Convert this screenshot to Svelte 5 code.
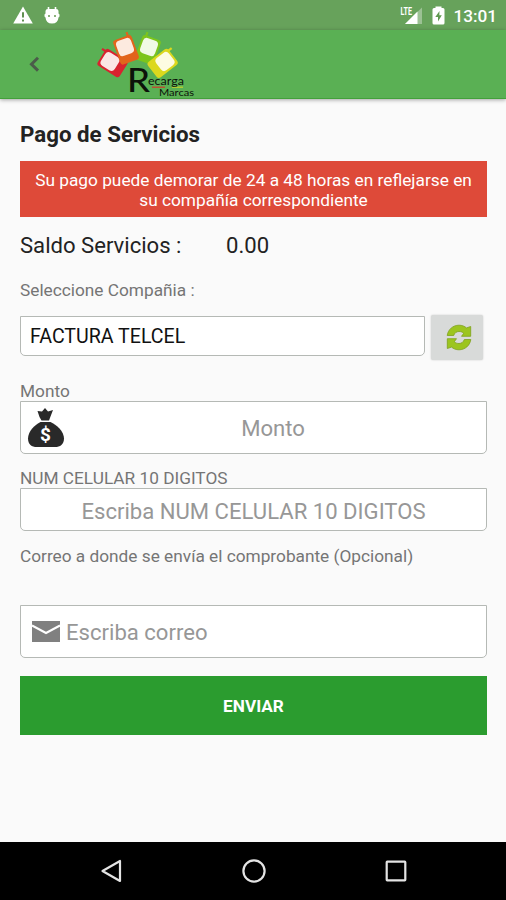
<script lang="ts">
  let saldo = $state('0.00')
  let monto = $state('')
  let celular = $state('')
  let correo = $state('')

  const phones = [
    { x: 110, y: 61.5, angle: -58, antenna: 6.5, color: '#d8232f', fill: '#fbe6e5' },
    { x: 149, y: 47, angle: 20, antenna: -6.5, color: '#7cc51c', fill: '#f1fae6' },
    { x: 125, y: 47, angle: -20, antenna: 6.5, color: '#e2641b', fill: '#fdeadf' },
    { x: 165, y: 61.5, angle: 52, antenna: -6.5, color: '#dcd81e', fill: '#fdfce2' }
  ]
</script>

<div class="screen">
  <div class="status">
    <svg class="warning" width="20" height="18" viewBox="0 0 20 18">
      <path d="M10 .5 19.8 17.5H.2z" fill="#fff" />
      <path d="M10 6.2v5.3M10 13.4v2" stroke="#5f8f50" stroke-width="2" />
    </svg>
    <svg class="robot" width="16" height="19" viewBox="0 0 16 19">
      <path d="M4.500 1v3M11.500 1v3" stroke="#fff" stroke-width="1.600" />
      <path d="M1.500 5Q1.500 3 4 3h8q2.500 0 2.500 2v2.500l1 1v2l-1 1Q14 17.500 8 17.500T1.500 11.500l-1-1v-2l1-1z" fill="#fff" />
      <circle cx="5" cy="10" r="1" fill="#64984f" />
      <circle cx="11" cy="10" r="1" fill="#64984f" />
    </svg>
    <svg class="signal" width="24" height="20" viewBox="0 0 24 20">
      <path d="M22 2.500V19H5z" fill="#9cc194" />
      <path d="M17.500 6.500V19H5z" fill="#fff" />
      <text x="0.500" y="9.500" textLength="11.500" lengthAdjust="spacingAndGlyphs">LTE</text>
    </svg>
    <svg class="battery" width="13" height="19" viewBox="0 0 13 19">
      <path d="M3.500 2V.5h6V2H11q1.500 0 1.500 1.500V17q0 1.500-1.500 1.500H2Q.5 18.500.5 17V3.500Q.5 2 2 2z" fill="#fff" />
      <path d="M7.500 5 3.300 11H6v4.500L9.800 9.300H7.300z" fill="#5f9950" />
    </svg>
    <span class="clock">13:01</span>
  </div>

  <header>
    <button class="back" aria-label="Regresar">
      <svg width="11" height="16" viewBox="0 0 11 16">
        <path d="M9 1.800 2.500 8.200 9 14.600" fill="none" stroke="#4b5b4a" stroke-width="3" />
      </svg>
    </button>
    <svg class="logo" width="106" height="68" viewBox="92 30 106 68">
      {#each phones as { x, y, angle, antenna, color, fill }}
        <g transform="translate({x} {y}) rotate({angle})">
          <rect x="-9.800" y="-10" width="19.600" height="26" rx="3" fill={color} />
          <path d="M{antenna}-9v-4.500" stroke={color} stroke-width="2.200" />
          <rect x="-7.800" y="-8" width="15.600" height="16" rx="4" {fill} />
        </g>
      {/each}
      <text class="big" x="127" y="92" textLength="23" lengthAdjust="spacingAndGlyphs">R</text>
      <path d="M152 87.200h13" stroke="#d13b2a" stroke-width="1.200" />
      <path d="M172 87.200h11" stroke="#c9d32a" stroke-width="1.200" />
      <text class="small" x="148" y="85.300" textLength="36" lengthAdjust="spacingAndGlyphs">ecarga</text>
      <text class="small marcas" x="159" y="96.200" textLength="35" lengthAdjust="spacingAndGlyphs">Marcas</text>
    </svg>
  </header>

  <main>
    <h1>Pago de Servicios</h1>
    <p class="alert">
      Su pago puede demorar de 24 a 48 horas en reflejarse en<br />su compañía correspondiente
    </p>
    <div class="saldo">
      <span class="name">Saldo Servicios :</span>
      <span>{saldo}</span>
    </div>

    <div class="label company">Seleccione Compañia :</div>
    <div class="picker">
      <button class="field select">FACTURA TELCEL</button>
      <button class="refresh" aria-label="Actualizar">
        <svg width="26" height="27" viewBox="0 0 26 27">
          <g fill="#9cc51f" stroke="#7da11c" stroke-width=".8" stroke-linejoin="round">
            <path d="M1.200 11.500C2 5.500 7 1.200 13 1.200c3 0 5.500 1 7.500 2.700L24.700 2.500V12.300H15.500l2.200-3C16.300 8 15 7.500 13 7.500c-2.500 0-4.500 1.500-5.300 4z" />
            <path d="M24.800 15.500C24 21.500 19 25.800 13 25.800c-3 0-5.500-1-7.500-2.700L1.300 24.500V14.700H10.500l-2.200 3C9.700 19 11 19.500 13 19.500c2.500 0 4.500-1.500 5.300-4z" />
          </g>
        </svg>
      </button>
    </div>

    <label class="label monto" for="monto">Monto</label>
    <div class="field tall">
      <svg class="bag" width="38" height="41" viewBox="0 0 38 41">
        <path d="M10.500 4 15 4.500 18 1l3 3.500 5-1.500-2.500 6.500L22 13.500h-7.500L12.500 10z" fill="#292929" />
        <path d="M13.500 15h10c6 2.500 13.500 9.500 13.500 16.500 0 6-4 8.500-9 8.500H10c-5.500 0-9-2.500-9-8.500 0-7 7-14 12.500-16.500z" fill="#292929" />
        <text x="18.500" y="34" text-anchor="middle">$</text>
      </svg>
      <input id="monto" class="center" placeholder="Monto" bind:value={monto} />
    </div>

    <label class="label celular" for="celular">NUM CELULAR 10 DIGITOS</label>
    <div class="field short">
      <input id="celular" class="center" placeholder="Escriba NUM CELULAR 10 DIGITOS" bind:value={celular} />
    </div>

    <label class="label correo" for="correo">Correo a donde se envía el comprobante (Opcional)</label>
    <div class="field tall mail">
      <svg width="28" height="21" viewBox="0 0 28 21">
        <path d="M0 0h28v21H0z" fill="#808080" />
        <path d="M0 4.500 14 12 28 4.500" fill="none" stroke="#fff" stroke-width="2" />
      </svg>
      <input id="correo" placeholder="Escriba correo" bind:value={correo} />
    </div>

    <button class="send">ENVIAR</button>
  </main>

  <nav>
    <svg width="24" height="26" viewBox="0 0 24 26">
      <path d="M21 3v20L3.500 13z" />
    </svg>
    <svg width="26" height="26" viewBox="0 0 26 26">
      <circle cx="13" cy="13" r="10.600" />
    </svg>
    <svg width="24" height="26" viewBox="0 0 24 26">
      <rect x="2.700" y="3.700" width="18.600" height="18.600" rx=".5" />
    </svg>
  </nav>
</div>

<style>
  :global(body) {
    margin: 0;
  }

  .screen {
    display: flex;
    flex-direction: column;
    width: 506px;
    height: 900px;
    overflow: hidden;
    background: #fafafa;
    color: #222;
    font-family: Roboto, sans-serif;
  }

  svg {
    display: block;
    flex-shrink: 0;
  }

  button {
    padding: 0;
    border: 0;
    font-family: inherit;
  }

  .status {
    display: flex;
    align-items: center;
    box-sizing: border-box;
    height: 30px;
    padding: 0 9px 0 13px;
    background: #67a25b;
    color: #fff;
  }

  .robot {
    margin-left: 11px;
  }

  .signal {
    margin-left: auto;
  }

  .signal text {
    font-size: 10px;
    font-weight: 700;
    fill: #fff;
  }

  .battery {
    margin-left: 8px;
  }

  .clock {
    margin-left: 8px;
    padding-top: 2px;
    font-size: 17.2px;
    font-weight: 500;
  }

  header {
    display: flex;
    box-sizing: border-box;
    height: 69px;
    flex-shrink: 0;
    background: #5ab054;
    border-bottom: 1px solid #43a03b;
    box-shadow: 0 1px 4px rgba(0, 0, 0, 0.35);
  }

  .back {
    display: flex;
    align-items: center;
    width: 63px;
    padding-left: 29px;
    background: none;
  }

  .logo {
    margin-left: 29px;
  }

  .logo text {
    fill: #0c120a;
  }

  .logo .big {
    font-family: Lato, sans-serif;
    font-size: 32px;
    font-weight: 500;
  }

  .logo .small {
    font-family: Lato, sans-serif;
    font-size: 11px;
  }

  .logo .marcas {
    font-size: 9.5px;
  }

  main {
    display: flex;
    flex: 1;
    flex-direction: column;
    padding: 22px 19px 0 20px;
  }

  h1 {
    margin: 0;
    font-size: 22.3px;
    font-weight: 700;
    line-height: 26px;
  }

  .alert {
    height: 47px;
    margin: 14px 0 0;
    padding-top: 8.5px;
    background: #de4a39;
    color: #fff;
    font-size: 17.3px;
    line-height: 20px;
    text-align: center;
  }

  .saldo {
    display: flex;
    margin-top: 15px;
    font-size: 22.1px;
    line-height: 26px;
  }

  .saldo .name {
    width: 206px;
  }

  .label {
    color: #757575;
    font-size: 17.25px;
    line-height: 20px;
  }

  .company {
    margin-top: 22.5px;
  }

  .picker {
    display: flex;
    gap: 6px;
    align-items: center;
    height: 46px;
    margin-top: 14px;
    padding-right: 4px;
  }

  .field {
    display: flex;
    align-items: center;
    box-sizing: border-box;
    background: #fff;
    border: 1px solid #b5b9b5;
    border-radius: 0 0 5px 5px;
  }

  .select {
    flex: 1;
    height: 40px;
    margin-bottom: 3px;
    padding: 2px 0 0 9px;
    color: #111;
    font-size: 19.6px;
  }

  .refresh {
    display: flex;
    align-items: center;
    justify-content: center;
    width: 52px;
    height: 45px;
    padding-left: 4px;
    background: #d8dad9;
    border-radius: 2px;
    box-shadow: 0 0 2px rgba(0, 0, 0, 0.2);
  }

  .monto {
    margin-top: 21px;
  }

  .tall {
    height: 53px;
  }

  .short {
    height: 43px;
  }

  .bag {
    margin-left: 6px;
  }

  .bag text {
    font-size: 19px;
    font-weight: 700;
    fill: #fff;
  }

  input {
    flex: 1;
    min-width: 0;
    padding: 1px 0 0;
    background: none;
    border: 0;
    outline: 0;
    color: #222;
    font: 22.1px Roboto, sans-serif;
  }

  .short input {
    padding-top: 3px;
  }

  .bag + input {
    padding-right: 5px;
  }

  input::placeholder {
    color: #979797;
    opacity: 1;
  }

  .center {
    text-align: center;
  }

  .celular {
    margin-top: 14px;
  }

  .correo {
    margin-top: 15px;
  }

  .mail {
    gap: 6px;
    margin-top: 39px;
    padding-left: 11px;
  }

  .send {
    height: 59px;
    margin-top: 18px;
    background: #2b9c2f;
    color: #fff;
    font-size: 17.2px;
    font-weight: 700;
  }

  nav {
    display: flex;
    align-items: center;
    justify-content: space-between;
    box-sizing: border-box;
    height: 58px;
    padding: 0 98px 0 99px;
    background: #000;
  }

  nav svg {
    fill: none;
    stroke: #e4e4e4;
    stroke-width: 2.2;
    stroke-linejoin: round;
  }
</style>
